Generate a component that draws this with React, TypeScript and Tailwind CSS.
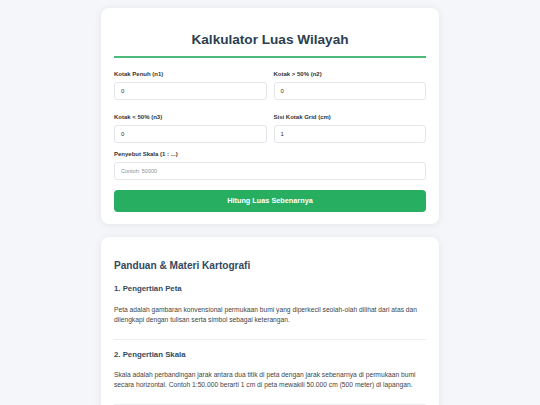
import React from "react";

const Field = ({ label, value, placeholder }: { label: string; value?: string; placeholder?: string }) => (
  <div className="flex flex-col">
    <label className="h-[8px] leading-[8px] text-[6px] font-bold text-[#333] mb-[4px]">{label}</label>
    <div className="h-[18px] rounded-[3px] border border-[#e3e6ea] bg-white flex items-center pl-[6px]">
      {value !== undefined ? (
        <span className="text-[6px] text-[#333]">{value}</span>
      ) : (
        <span className="text-[5.5px] text-[#8a8f96]">{placeholder}</span>
      )}
    </div>
  </div>
);

export default function App() {
  return (
    <div
      className="w-[540px] bg-[#f4f6f9] flex flex-col items-center pt-[8px] overflow-hidden h-[405px]"
      style={{ fontFamily: '"Liberation Sans", Arial, sans-serif' }}
    >
      <div className="w-[338px] bg-white rounded-[8px] shadow-[0_1px_8px_rgba(0,0,0,0.07)] px-[13px] pt-[24px] pb-[12px]">
        <h1 className="h-[16px] leading-[16px] text-[13.6px] font-bold text-[#2c3e50] text-center">Kalkulator Luas Wilayah</h1>
        <div className="h-[2px] bg-[#4cb87a] mt-[8px]" />
        <div className="grid grid-cols-2 gap-x-[7px] mt-[12px]">
          <Field label="Kotak Penuh (n1)" value="0" />
          <Field label="Kotak > 50% (n2)" value="0" />
        </div>
        <div className="grid grid-cols-2 gap-x-[7px] mt-[13px]">
          <Field label="Kotak < 50% (n3)" value="0" />
          <Field label="Sisi Kotak Grid (cm)" value="1" />
        </div>
        <div className="mt-[7px]">
          <Field label="Penyebut Skala (1 : ...)" placeholder="Contoh: 50000" />
        </div>
        <button className="mt-[10px] w-full h-[22px] rounded-[4px] bg-[#27ae60] text-white text-[7.3px] font-bold flex items-center justify-center">
          Hitung Luas Sebenarnya
        </button>
      </div>

      <div className="w-[338px] bg-white rounded-[8px] shadow-[0_1px_8px_rgba(0,0,0,0.07)] px-[13px] pt-[22px] mt-[13px] shrink-0">
        <h2 className="h-[14px] leading-[14px] text-[10.1px] font-bold text-[#34495e]">Panduan &amp; Materi Kartografi</h2>
        <h3 className="mt-[11px] h-[10px] leading-[10px] text-[7.8px] font-bold text-[#34495e]">1. Pengertian Peta</h3>
        <p className="mt-[11px] text-[6.7px] leading-[10.4px] text-[#444]">
          Peta adalah gambaran konvensional permukaan bumi yang diperkecil seolah-olah dilihat dari atas dan dilengkapi dengan tulisan serta simbol sebagai keterangan.
        </p>
        <div className="h-px bg-[#eceef1] mt-[13px]" />
        <h3 className="mt-[10px] h-[10px] leading-[10px] text-[7.8px] font-bold text-[#34495e]">2. Pengertian Skala</h3>
        <p className="mt-[10px] text-[6.7px] leading-[10.4px] text-[#444]">
          Skala adalah perbandingan jarak antara dua titik di peta dengan jarak sebenarnya di permukaan bumi secara horizontal. Contoh 1:50.000 berarti 1 cm di peta mewakili 50.000 cm (500 meter) di lapangan.
        </p>
        <div className="h-px bg-[#eceef1] mt-[13px]" />
        <div className="h-[40px]" />
      </div>
    </div>
  );
}
